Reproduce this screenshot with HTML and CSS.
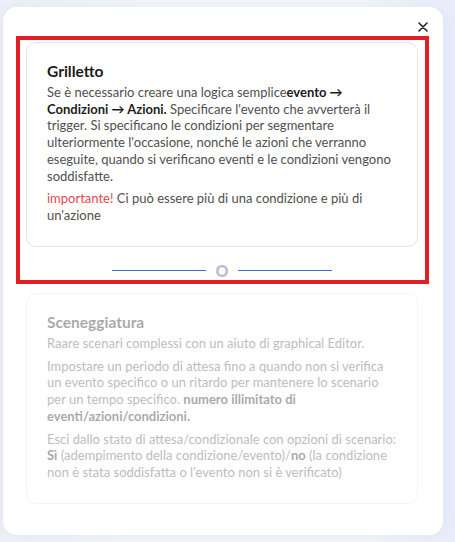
FILE: index.html
```html
<!DOCTYPE html>
<html lang="it">
<head>
<meta charset="utf-8">
<title>Grilletto</title>
<link rel="stylesheet" href="styles.css">
</head>
<body>
<div class="backdrop">
  <div class="modal">
    <button class="close" aria-label="Chiudi">
      <svg width="10" height="10" viewBox="0 0 10 10"><path d="M1 1L9 9M9 1L1 9" stroke="#222" stroke-width="1.6" stroke-linecap="round"/></svg>
    </button>
    <div class="highlight">
      <div class="card">
        <h3 class="card-title">Grilletto</h3>
        <p class="card-text">Se è necessario creare una logica semplice<b>evento → Condizioni → Azioni.</b> Specificare l'evento che avverterà il trigger. Si specificano le condizioni per segmentare ulteriormente l'occasione, nonché le azioni che verranno eseguite, quando si verificano eventi e le condizioni vengono soddisfatte.</p>
        <p class="card-text"><span class="warn">importante!</span> Ci può essere più di una condizione e più di un'azione</p>
      </div>
      <div class="divider">
        <span class="divider-line"></span>
        <span class="divider-text">O</span>
        <span class="divider-line"></span>
      </div>
    </div>
    <div class="card card-muted">
      <h3 class="card-title">Sceneggiatura</h3>
      <p class="card-text">Raare scenari complessi con un aiuto di graphical Editor.</p>
      <p class="card-text">Impostare un periodo di attesa fino a quando non si verifica un evento specifico o un ritardo per mantenere lo scenario per un tempo specifico. <b>numero illimitato di eventi/azioni/condizioni.</b></p>
      <p class="card-text">Esci dallo stato di attesa/condizionale con opzioni di scenario: <b>Sì</b> (adempimento della condizione/evento)/<b>no</b> (la condizione non è stata soddisfatta o l'evento non si è verificato)</p>
    </div>
  </div>
</div>
</body>
</html>
```

FILE: styles.css
```css
* { box-sizing: border-box; }
html, body { margin: 0; padding: 0; }
body {
  width: 455px;
  height: 542px;
  overflow: hidden;
  background: #f3f5fb;
  font-family: Lato, "Noto Sans", sans-serif;
}
.backdrop {
  width: 455px;
  height: 542px;
  padding: 7px 12px 0 3px;
  background: linear-gradient(90deg, #eef1f8 0%, #f6f7fb 30%, #f6f7fb 80%, #e9edf9 100%);
}
.modal {
  position: relative;
  width: 440px;
  height: 528px;
  background: #fff;
  border-radius: 14px;
  padding: 29px 14px 0 13px;
  box-shadow: 0 0 16px rgba(190, 200, 235, 0.35);
}
.close {
  position: absolute;
  top: 10px;
  right: 10px;
  width: 20px;
  height: 20px;
  padding: 0;
  border: 0;
  background: none;
  display: flex;
  align-items: center;
  justify-content: center;
}
.highlight {
  border: 4px solid #e31e24;
  padding: 2px 7px 0 6px;
  height: 248px;
}
.card {
  border: 1px solid #e1e3eb;
  border-radius: 10px;
  padding: 19px 20px 22px 20px;
  background: #fff;
}
.card-title {
  margin: 0 0 4px;
  font-size: 15.5px;
  line-height: 18px;
  font-weight: 700;
  color: #1b1b1b;
}
.card-text {
  margin: 0 0 6px;
  font-size: 13px;
  line-height: 16.7px;
  color: #4f4f4f;
}
.card-text:last-child { margin-bottom: 0; }
.card-text b { font-weight: 700; color: #1b1b1b; }
.warn { color: #e5484d; }
.divider {
  display: flex;
  align-items: center;
  justify-content: center;
  gap: 10px;
  height: 24px;
  margin-top: 12px;
}
.divider-line {
  width: 94px;
  height: 1px;
  background: #3d6be0;
}
.divider-text {
  font-size: 16px;
  font-weight: 900;
  color: #b4bfd3;
  line-height: 1;
}
.card-muted {
  margin: 9px 0 0 10px;
  width: 392px;
  opacity: 0.38;
}
```
